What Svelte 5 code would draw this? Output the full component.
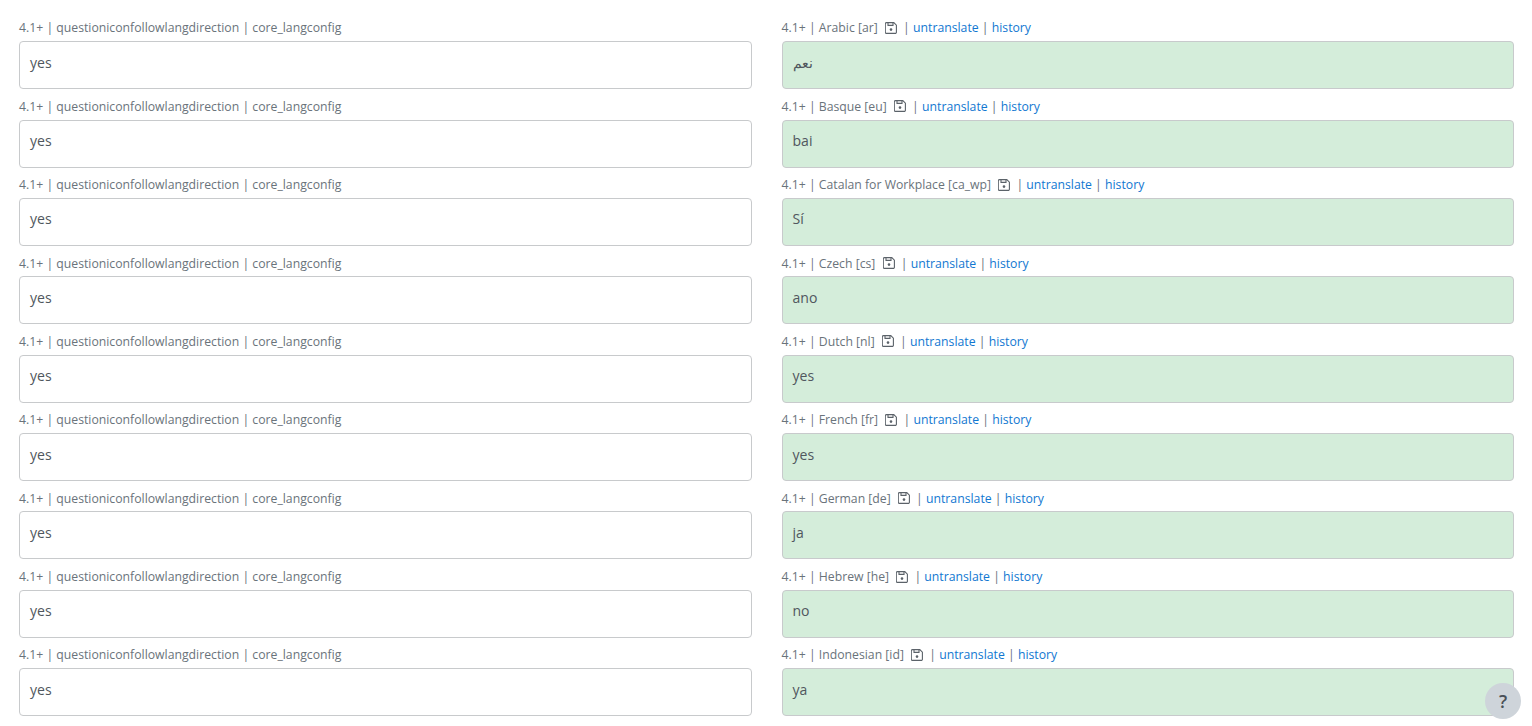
<script>
  const languages = [
    { name: 'Arabic [ar]', value: 'نعم', rtl: true },
    { name: 'Basque [eu]', value: 'bai' },
    { name: 'Catalan for Workplace [ca_wp]', value: 'Sí' },
    { name: 'Czech [cs]', value: 'ano' },
    { name: 'Dutch [nl]', value: 'yes' },
    { name: 'French [fr]', value: 'yes' },
    { name: 'German [de]', value: 'ja' },
    { name: 'Hebrew [he]', value: 'no' },
    { name: 'Indonesian [id]', value: 'ya' }
  ];
</script>

<div class="page">
  {#each languages as lang}
    <div class="row">
      <div class="col">
        <div class="info">4.1+ | questioniconfollowlangdirection | core_langconfig</div>
        <div class="field">yes</div>
      </div>
      <div class="col">
        <div class="info">
          4.1+ | {lang.name}
          <svg class="save" viewBox="0 0 12 12" aria-hidden="true">
            <path d="M1.5 .6h7.3l2.6 2.6v7a1.2 1.2 0 0 1-1.2 1.2H1.5a1.2 1.2 0 0 1-1.2-1.2V1.8A1.2 1.2 0 0 1 1.5 .6z" fill="none" stroke="currentColor" stroke-width="1.1"/>
            <path d="M3 1v2.4h5V1" fill="none" stroke="currentColor" stroke-width="1.1"/>
            <circle cx="6" cy="7.6" r="1.3" fill="currentColor"/>
          </svg>
          <span class="sep">|</span>
          <a href="#untranslate">untranslate</a> | <a href="#history">history</a>
        </div>
        <div class="field translated">{lang.value}</div>
      </div>
    </div>
  {/each}
</div>

<button class="help" type="button" aria-label="Help">?</button>

<style>
  :global(body) {
    background: #fff;
    overflow: hidden;
  }

  .page {
    height: 726px;
    box-sizing: border-box;
    padding: 10.8px 18px 0 19px;
    overflow: hidden;
    font-family: "Open Sans", sans-serif;
    color: #50575e;
  }

  .row {
    display: grid;
    grid-template-columns: 1fr 1fr;
    column-gap: 30px;
    height: 78.375px;
  }

  .info {
    height: 30.375px;
    padding-top: 8.6px;
    box-sizing: border-box;
    font-size: 12.24px;
    line-height: 18px;
    color: #6a737b;
    white-space: nowrap;
  }

  .info a {
    color: #1177d1;
    text-decoration: none;
  }

  .save {
    width: 12px;
    height: 12px;
    margin: 0 3px 0 4px;
    vertical-align: -1.5px;
    color: #5b6269;
  }

  .field {
    height: 48px;
    box-sizing: border-box;
    padding: 9.5px 10px 0;
    border: 1px solid #c8cacc;
    border-radius: 4px;
    background: #fff;
    font-size: 14.0625px;
    line-height: 22px;
  }

  .translated {
    background: #d4edda;
  }

  .help {
    position: fixed;
    right: 11px;
    bottom: 7px;
    width: 36px;
    height: 36px;
    padding: 0;
    border: none;
    border-radius: 50%;
    background: #ced4da;
    color: #495057;
    font-family: "Open Sans", sans-serif;
    font-size: 18px;
    font-weight: 600;
    line-height: 36px;
    text-align: center;
  }
</style>
